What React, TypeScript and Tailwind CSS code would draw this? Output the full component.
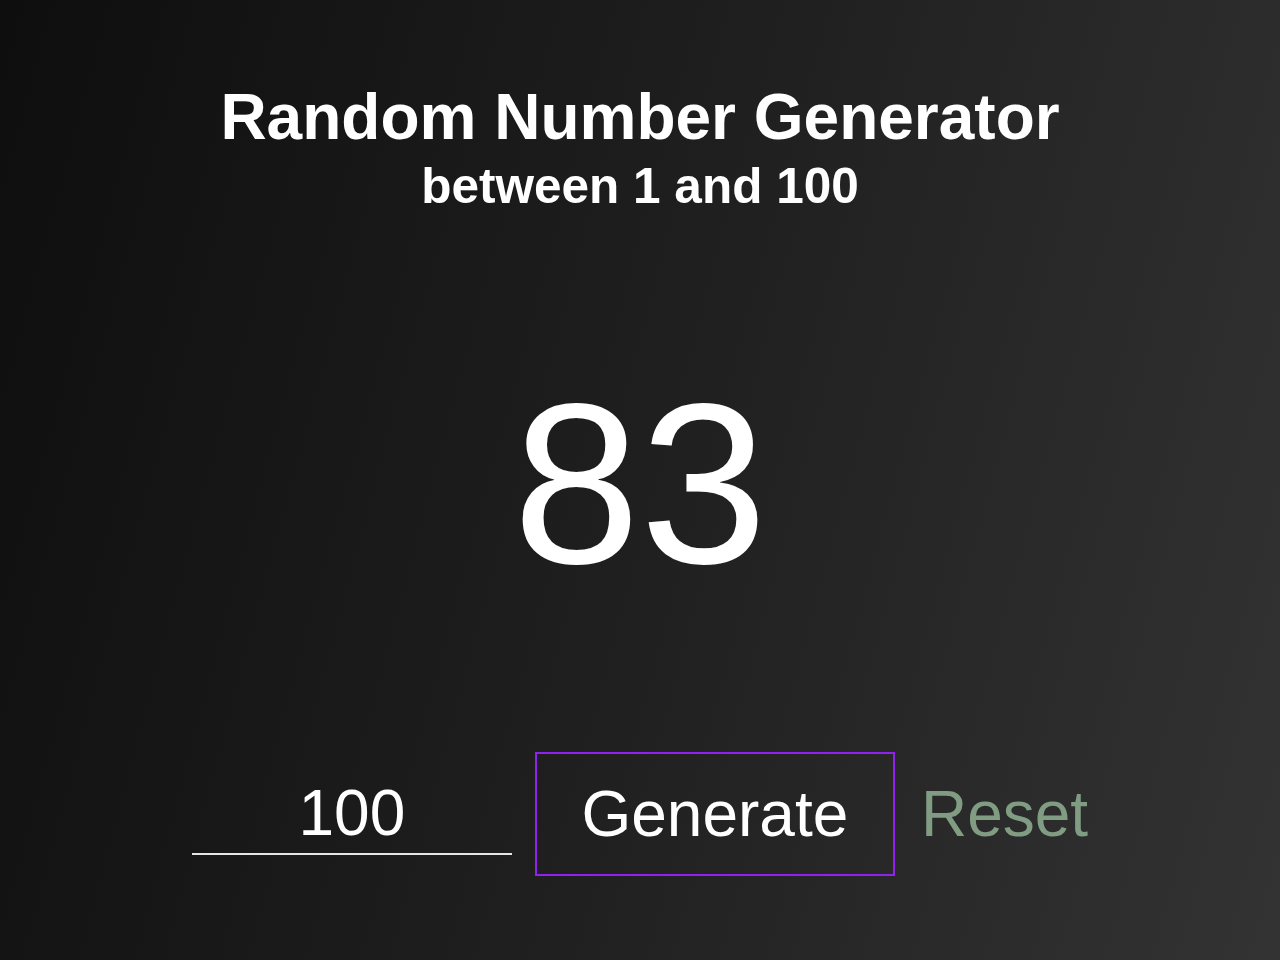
import React, { useState } from "react";

export default function App() {
  const [value, setValue] = useState("100");
  const [num, setNum] = useState(83);
  const max = parseInt(value, 10) || 100;

  return (
    <div
      className="w-full h-[960px] overflow-hidden bg-[linear-gradient(105deg,#0e0e0e_0%,#1f1f1f_50%,#333333_100%)] text-white flex flex-col items-center"
      style={{ fontFamily: '"Liberation Sans", Arial, sans-serif' }}
    >
      <h1 className="mt-[81px] text-[64px] font-bold leading-[73px] text-white">
        Random Number Generator
      </h1>
      <h2 className="mt-[3px] text-[49.5px] font-bold leading-[57px] text-white">
        between 1 and {max}
      </h2>

      <div className="mt-[154px] text-[229px] font-normal leading-none h-[232px] text-white flex items-center">
        {num}
      </div>

      <div className="mt-[152px] flex items-center justify-center">
        <input
          value={value}
          onChange={(e) => setValue(e.target.value)}
          className="w-[320px] h-[82px] bg-transparent border-0 border-b-2 border-[#e6e6e6] text-center text-[64px] text-white outline-none"
          style={{ fontFamily: '"Liberation Sans", Arial, sans-serif' }}
        />
        <button
          onClick={() => setNum(Math.floor(Math.random() * max) + 1)}
          className="ml-[23px] w-[360px] h-[124px] border-2 border-[#9022ee] bg-transparent text-[64px] text-white"
        >
          Generate
        </button>
        <button
          onClick={() => {
            setValue("100");
            setNum(83);
          }}
          className="ml-[26px] bg-transparent text-[64px] text-[#809c82]"
        >
          Reset
        </button>
      </div>
    </div>
  );
}
